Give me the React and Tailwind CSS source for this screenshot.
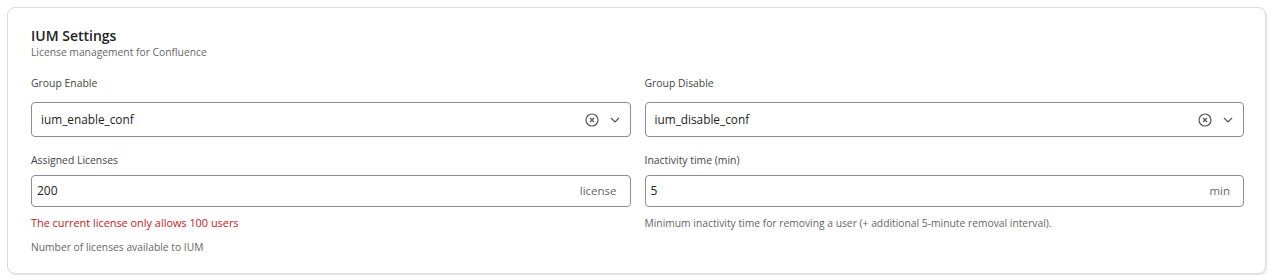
import React from 'react';

const ClearIcon = () => (
  <svg width="14" height="14" viewBox="0 0 14 14" fill="none" stroke="#555" strokeWidth="1.2">
    <circle cx="7" cy="7" r="6" />
    <path d="M5 5l4 4M9 5l-4 4" />
  </svg>
);

const Chevron = () => (
  <svg width="10" height="6" viewBox="0 0 10 6" fill="none" stroke="#555" strokeWidth="1.2">
    <path d="M1 1l4 4 4-4" />
  </svg>
);

const SelectField = ({ label, value }) => (
  <div>
    <label className="block text-[10.4px] text-[#444] mb-[11px] leading-[16px]">{label}</label>
    <div className="h-[35px] flex items-center border border-[#8c8c94] rounded-[4px] pl-[9px] pr-[10px]">
      <span className="flex-1 text-[11.8px] text-[#222]">{value}</span>
      <ClearIcon />
      <span className="ml-[11px] flex"><Chevron /></span>
    </div>
  </div>
);

const InputField = ({ label, value, unit }) => (
  <div>
    <label className="block text-[10.4px] text-[#444] mb-[7px] leading-[16px]">{label}</label>
    <div className="h-[32px] flex items-center border border-[#8c8c94] rounded-[4px] pl-[5px] pr-[13px]">
      <span className="flex-1 text-[12px] text-[#222]">{value}</span>
      <span className="text-[11.5px] text-[#666]">{unit}</span>
    </div>
  </div>
);

export default function App() {
  return (
    <div className="bg-white h-[280px] pt-[7px] px-[7px]" style={{ fontFamily: '"Open Sans", "Noto Sans", sans-serif' }}>
      <div className="w-[1259px] h-[267px] border border-[#dcdcdc] rounded-[8px] shadow-[1px_1px_2px_rgba(0,0,0,0.12)] pl-[23px] pr-[21px] pt-[19px]">
        <h2 className="text-[14px] font-semibold text-[#222] leading-[18px]">IUM Settings</h2>
        <p className="text-[10.3px] text-[#666] leading-[14px]">License management for Confluence</p>
        <div className="grid grid-cols-2 gap-x-[14px] mt-[16px]">
          <SelectField label="Group Enable" value="ium_enable_conf" />
          <SelectField label="Group Disable" value="ium_disable_conf" />
          <div className="mt-[15px]">
            <InputField label="Assigned Licenses" value="200" unit="license" />
            <p className="text-[10.9px] text-[#c4161c] mt-[8px] leading-[16px]">The current license only allows 100 users</p>
            <p className="text-[10.3px] text-[#666] mt-[8px] leading-[16px]">Number of licenses available to IUM</p>
          </div>
          <div className="mt-[15px]">
            <InputField label="Inactivity time (min)" value="5" unit="min" />
            <p className="text-[10.3px] text-[#666] mt-[8px] leading-[16px]">Minimum inactivity time for removing a user (+ additional 5-minute removal interval).</p>
          </div>
        </div>
      </div>
    </div>
  );
}
